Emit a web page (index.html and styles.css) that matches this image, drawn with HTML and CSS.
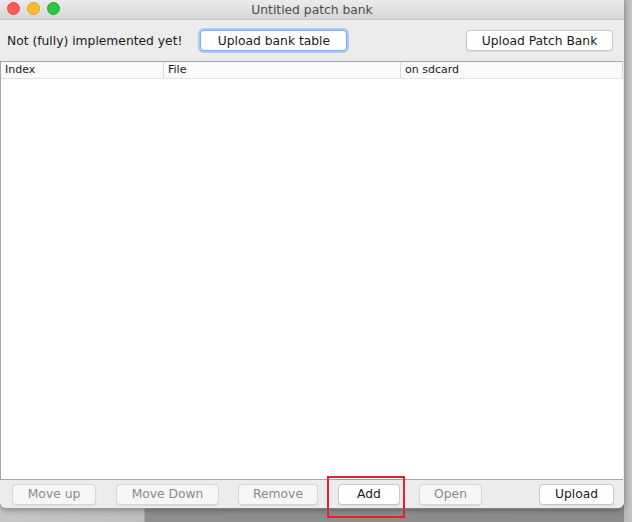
FILE: index.html
```html
<!DOCTYPE html>
<html>
<head>
<meta charset="utf-8">
<link rel="stylesheet" href="styles.css">
</head>
<body>
<div class="desktop">
  <div class="window">
    <div class="titlebar">
      <div class="lights">
        <span class="light red"></span>
        <span class="light yellow"></span>
        <span class="light green"></span>
      </div>
      <div class="title">Untitled patch bank</div>
    </div>
    <div class="toolbar">
      <span class="note">Not (fully) implemented yet!</span>
      <button class="btn focus btn-table">Upload bank table</button>
      <span class="spacer"></span>
      <button class="btn btn-bank">Upload Patch Bank</button>
    </div>
    <div class="table">
      <div class="thead">
        <div class="th c1">Index</div>
        <div class="th c2">File</div>
        <div class="th c3">on sdcard</div>
      </div>
      <div class="tbody"></div>
    </div>
    <div class="bottombar">
      <button class="btn dis w-up">Move up</button>
      <button class="btn dis w-down">Move Down</button>
      <button class="btn dis w-remove">Remove</button>
      <span class="addwrap"><button class="btn w-add">Add</button><span class="highlight"></span></span>
      <button class="btn dis w-open">Open</button>
      <span class="spacer"></span>
      <button class="btn w-upload">Upload</button>
    </div>
  </div>
</div>
</body>
</html>
```

FILE: styles.css
```css
* { box-sizing: border-box; }
html, body { margin: 0; padding: 0; }
body {
  width: 632px;
  height: 522px;
  overflow: hidden;
  font-family: "DejaVu Sans", "Liberation Sans", sans-serif;
  background: linear-gradient(to right, #c6c6c6 0, #bebebe 144px, #8e8e8e 145px, #8a8a8a 100%);
}
.desktop {
  width: 632px;
  height: 522px;
  background:
    linear-gradient(to right, transparent 624px, #b9b9b9 624px, #c4c4c4 632px);
}
.window {
  width: 624px;
  height: 508px;
  background: #ececec;
  border-radius: 0 0 6px 6px;
  box-shadow: 0 0 0 0.5px #9a9a9a, 0 2px 6px rgba(0,0,0,0.35);
  display: flex;
  flex-direction: column;
}
.titlebar {
  height: 20px;
  flex: none;
  background: linear-gradient(#ebebeb, #d6d6d6);
  border-bottom: 1px solid #c4c4c4;
  position: relative;
  display: flex;
  align-items: center;
  justify-content: center;
}
.lights {
  position: absolute;
  left: 7px;
  top: 2px;
  display: flex;
  gap: 7px;
}
.light {
  width: 13px;
  height: 13px;
  border-radius: 50%;
  display: block;
}
.red { background: #fc5b57; border: 0.5px solid #de4a45; }
.yellow { background: #fdbb2e; border: 0.5px solid #dd9f23; }
.green { background: #2dc841; border: 0.5px solid #22a732; }
.title {
  font-size: 12.3px;
  color: #4d4d4d;
  padding-top: 1px;
}
.toolbar {
  height: 41px;
  flex: none;
  display: flex;
  align-items: center;
  padding: 0 11px 0 7px;
}
.note {
  font-size: 12.3px;
  color: #1a1a1a;
}
.spacer { flex: 1; }
.btn {
  font-family: inherit;
  font-size: 12.3px;
  height: 21px;
  padding: 0;
  background: #ffffff;
  border: 1px solid #c8c8c8;
  border-radius: 4px;
  color: #1a1a1a;
  box-shadow: 0 0.5px 1px rgba(0,0,0,0.08);
}
.btn-table { width: 147px; margin-left: 18px; }
.focus {
  border: 1px solid #7eaef5;
  box-shadow: 0 0 0 2px #a8c8f6;
}
.btn-bank { width: 147px; }
.table {
  flex: none;
  height: 419px;
  background: #fff;
  border-top: 1px solid #a6a6a6;
  border-bottom: 1px solid #a6a6a6;
  border-left: 1px solid #a6a6a6;
  margin-right: 1px;
  display: flex;
  flex-direction: column;
}
.thead {
  height: 17px;
  display: flex;
  background: #fafafa;
  border-bottom: 1px solid #e4e4e4;
  flex: none;
}
.th {
  font-size: 11px;
  color: #1a1a1a;
  padding-left: 4px;
  line-height: 16px;
  border-right: 1px solid #dcdcdc;
}
.c1 { width: 163px; }
.c2 { width: 237px; }
.c3 { width: 222px; }
.tbody { flex: 1; }
.bottombar {
  flex: 1;
  display: flex;
  align-items: center;
  padding: 0 10px 0 12px;
  border-radius: 0 0 6px 6px;
}
.dis { color: #8a8a8a; background: #f6f6f6; border-color: #d6d6d6; }
.w-up { width: 84px; }
.w-down { width: 103px; margin-left: 20px; }
.w-remove { width: 80px; margin-left: 19px; }
.addwrap { position: relative; margin-left: 20px; display: flex; }
.w-add { width: 62px; }
.highlight {
  position: absolute;
  left: -11px;
  top: -8px;
  width: 78px;
  height: 42px;
  border: 2px solid #e8202a;
  pointer-events: none;
}
.w-open { width: 63px; margin-left: 19px; }
.w-upload { width: 75px; }
```
